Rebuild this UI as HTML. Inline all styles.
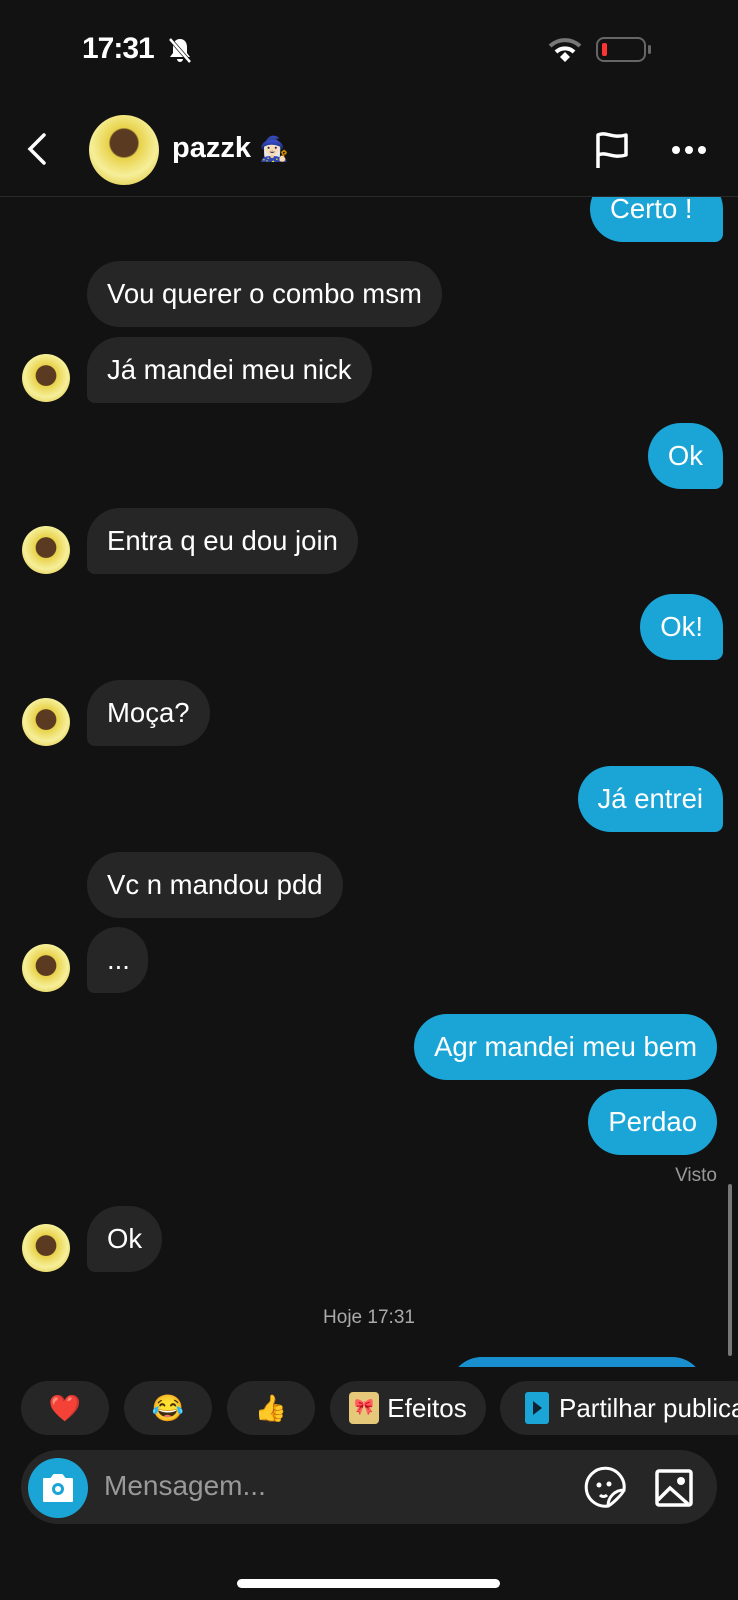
<!DOCTYPE html>
<html><head><meta charset="utf-8"><style>
*{margin:0;padding:0;box-sizing:border-box}
body{width:738px;height:1600px;background:#121212;font-family:"Liberation Sans",sans-serif;color:#fff;position:relative;overflow:hidden}
.a{position:absolute}
.b{position:absolute;height:66px;border-radius:33px;font-size:27.5px;line-height:66px;padding:0 20px;white-space:nowrap}
.r{background:#262626;left:87px}
.s{background:#1ba5d6}
.r.t{border-bottom-left-radius:8px}
.s.t{border-bottom-right-radius:8px}
.av{position:absolute;left:22px;width:48px;height:48px;border-radius:50%;background:radial-gradient(circle at 50% 45%,#5a3a20 0 28%,#e8d24a 30%,#f6ef9a 60%,#d8b820 100%)}
.chip{position:absolute;top:1381px;height:54px;border-radius:27px;background:#262626;font-size:26px;display:flex;align-items:center;justify-content:center}
</style></head><body>
<div class="a" style="left:82px;top:32px;font-size:30px;font-weight:bold;letter-spacing:-1px">17:31</div>
<svg class="a" style="left:166px;top:36px" width="28" height="28" viewBox="0 0 28 28"><path d="M14 3c-5 0-7 4-7 8v6l-3 4h20l-3-4v-6c0-4-2-8-7-8zM11 23a3 3 0 0 0 6 0" fill="#fff"/><line x1="4" y1="3" x2="24" y2="26" stroke="#121212" stroke-width="4"/><line x1="4" y1="3" x2="24" y2="26" stroke="#fff" stroke-width="2.5"/></svg>
<svg class="a" style="left:548px;top:38px" width="34" height="24" viewBox="0 0 34 24"><path d="M2 8a22 22 0 0 1 30 0" stroke="#777" stroke-width="4" fill="none"/><path d="M8 14a13 13 0 0 1 18 0" stroke="#fff" stroke-width="4" fill="none"/><path d="M12 19l5-5 5 5-5 5z" fill="#fff"/></svg>
<div class="a" style="left:596px;top:37px;width:50px;height:25px;border:2px solid #666;border-radius:8px"><div style="position:absolute;left:4px;top:4px;width:5px;height:13px;background:#f33;border-radius:2px"></div></div>
<div class="a" style="left:648px;top:45px;width:3px;height:9px;background:#666;border-radius:2px"></div>

<svg class="a" style="left:24px;top:132px" width="26" height="34" viewBox="0 0 26 34"><path d="M20 3L6 17l14 14" stroke="#fff" stroke-width="3.5" fill="none" stroke-linecap="round"/></svg>
<div class="a" style="left:89px;top:115px;width:70px;height:70px;border-radius:50%;background:radial-gradient(circle at 50% 40%,#5a3a20 0 25%,#e8d24a 28%,#f6ef9a 60%,#d8b820 100%)"></div>
<div class="a" style="left:172px;top:132px;font-size:29px;font-weight:bold">pazzk <span style="font-size:24px">🧙🏻‍♀️</span></div>
<svg class="a" style="left:594px;top:130px" width="36" height="40" viewBox="0 0 36 40"><path d="M4 38V5c8-4 14 4 28 0v20c-14 4-20-4-28 0" stroke="#fff" stroke-width="3.5" fill="none" stroke-linejoin="round"/></svg>
<div class="a" style="left:672px;top:146px;width:8px;height:8px;border-radius:50%;background:#fff;box-shadow:13px 0 #fff,26px 0 #fff"></div>
<div class="a" style="left:0;top:196px;width:738px;height:1px;background:#2a2a2a"></div>

<div class="a" style="left:0;top:197px;width:738px;height:1170px;overflow:hidden">
<div style="position:relative;top:-197px;height:1600px">
<div class="b s t" style="left:590px;top:176px;width:133px">Certo !</div>
<div class="b r" style="top:261px">Vou querer o combo msm</div>
<div class="b r t" style="top:337px">Já mandei meu nick</div><div class="av" style="top:354px"></div>
<div class="b s t" style="right:15px;top:423px">Ok</div>
<div class="b r t" style="top:508px">Entra q eu dou join</div><div class="av" style="top:526px"></div>
<div class="b s t" style="right:15px;top:594px">Ok!</div>
<div class="b r t" style="top:680px">Moça?</div><div class="av" style="top:698px"></div>
<div class="b s t" style="right:15px;top:766px">Já entrei</div>
<div class="b r" style="top:852px">Vc n mandou pdd</div>
<div class="b r t" style="top:927px;width:61px">...</div><div class="av" style="top:944px"></div>
<div class="b s" style="right:21px;top:1014px">Agr mandei meu bem</div>
<div class="b s" style="right:21px;top:1089px">Perdao</div>
<div class="a" style="right:21px;top:1165px;font-size:19px;color:#999">Visto</div>
<div class="b r t" style="top:1206px">Ok</div><div class="av" style="top:1224px"></div>
<div class="a" style="left:0;width:738px;text-align:center;top:1307px;font-size:19px;color:#aaa">Hoje 17:31</div>
<div class="a" style="left:449px;top:1357px;width:256px;height:66px;background:#1a8fd0;border-radius:33px"></div>
<div class="a" style="left:728px;top:1184px;width:4px;height:172px;background:#777;border-radius:2px"></div>
</div></div>

<div class="chip" style="left:21px;width:88px">❤️</div>
<div class="chip" style="left:124px;width:88px">😂</div>
<div class="chip" style="left:227px;width:88px">👍</div>
<div class="chip" style="left:330px;width:156px"><span style="display:inline-block;width:30px;height:32px;background:#e6c87a;border-radius:4px;margin-right:8px;text-align:center;line-height:32px;font-size:16px">🎀</span>Efeitos</div>
<div class="chip" style="left:500px;width:260px;justify-content:flex-start;padding-left:25px"><span style="display:inline-block;width:24px;height:32px;background:#1ba5d6;border-radius:3px;margin-right:10px;position:relative"><span style="position:absolute;left:8px;top:9px;border-left:9px solid #123;border-top:7px solid transparent;border-bottom:7px solid transparent"></span></span>Partilhar publica</div>

<div class="a" style="left:21px;top:1450px;width:696px;height:74px;border-radius:37px;background:#262626"></div>
<div class="a" style="left:28px;top:1458px;width:60px;height:60px;border-radius:50%;background:#1ba5d6"></div>
<svg class="a" style="left:40px;top:1471px" width="36" height="34" viewBox="0 0 36 34"><path d="M4 8h7l3-4h8l3 4h7v22H4z" fill="#fff" stroke="#fff" stroke-width="2" stroke-linejoin="round"/><circle cx="18" cy="18" r="6" fill="#1ba5d6"/><circle cx="18" cy="18" r="3" fill="#fff"/></svg>
<div class="a" style="left:104px;top:1470px;font-size:28px;color:#999">Mensagem...</div>
<svg class="a" style="left:584px;top:1466px" width="44" height="44" viewBox="0 0 44 44"><path d="M40 24A19 19 0 1 0 24 40c0-9 7-16 16-16z" stroke="#fff" stroke-width="3" fill="none"/><path d="M24 40c3-1 14-11 16-16" stroke="#fff" stroke-width="3" fill="none"/><circle cx="15" cy="19" r="2.5" fill="#fff"/><circle cx="25" cy="18" r="2.5" fill="#fff"/><path d="M16 29c2 2 5 2 7 0" stroke="#fff" stroke-width="3" fill="none"/></svg>
<svg class="a" style="left:654px;top:1468px" width="40" height="40" viewBox="0 0 40 40"><rect x="3" y="3" width="34" height="34" rx="2" stroke="#fff" stroke-width="3.5" fill="none"/><path d="M4 32l12-12 18 16" stroke="#fff" stroke-width="3.5" fill="none"/><circle cx="27" cy="13" r="4" fill="#fff"/></svg>
<div class="a" style="left:237px;top:1579px;width:263px;height:9px;border-radius:5px;background:#fff"></div>
</body></html>
